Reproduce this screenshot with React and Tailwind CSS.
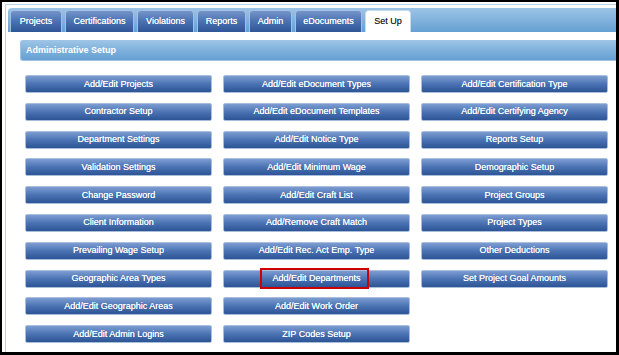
const tabs = [
  { label: "Projects", w: "w-[52px]" },
  { label: "Certifications", w: "w-[69px]" },
  { label: "Violations", w: "w-[57px]" },
  { label: "Reports", w: "w-[49px]" },
  { label: "Admin", w: "w-[43px]" },
  { label: "eDocuments", w: "w-[67px]" },
];

const columns = [
  [
    "Add/Edit Projects",
    "Contractor Setup",
    "Department Settings",
    "Validation Settings",
    "Change Password",
    "Client Information",
    "Prevailing Wage Setup",
    "Geographic Area Types",
    "Add/Edit Geographic Areas",
    "Add/Edit Admin Logins",
  ],
  [
    "Add/Edit eDocument Types",
    "Add/Edit eDocument Templates",
    "Add/Edit Notice Type",
    "Add/Edit Minimum Wage",
    "Add/Edit Craft List",
    "Add/Remove Craft Match",
    "Add/Edit Rec. Act Emp. Type",
    "Add/Edit Departments",
    "Add/Edit Work Order",
    "ZIP Codes Setup",
  ],
  [
    "Add/Edit Certification Type",
    "Add/Edit Certifying Agency",
    "Reports Setup",
    "Demographic Setup",
    "Project Groups",
    "Project Types",
    "Other Deductions",
    "Set Project Goal Amounts",
  ],
];

const SetupButton = ({ label, marked }) => (
  <div className="relative flex h-[18px] items-center justify-center rounded-[2px] border border-[#a9bedb] bg-gradient-to-b from-[#7d9dd1] via-[#4b73b3] to-[#2d5596] text-[9px] leading-none text-white [text-shadow:0_0_0.6px_rgba(255,255,255,0.9)]">
    {label}
    {marked && (
      <div className="absolute left-[36px] top-[-3px] h-[21px] w-[109px] border-2 border-[#cc0000]"></div>
    )}
  </div>
);

const App = () => {
  return (
    <div className="h-[355px] w-[619px] overflow-hidden border-b-[3px] border-l-2 border-r-[3px] border-t-2 border-black bg-white font-['Liberation_Sans',Arial,sans-serif]">
      <div className="ml-[3px] mt-[2px] h-full border-l border-t border-[#b9d2ea] pl-[2px] pt-[3px]">
        <div className="flex h-[24px] items-end gap-[3px] rounded-tl-[4px] bg-gradient-to-b from-[#9cc4e6] via-[#82b2dc] to-[#65a0d3] pl-[2px]">
          {tabs.map((t) => (
            <div
              key={t.label}
              className={`${t.w} flex h-[22px] items-center justify-center rounded-t-[4px] border border-b-0 border-[#a3bfe2] bg-gradient-to-b from-[#7495ca] via-[#4a71b1] to-[#2f5697] text-[9px] text-white [text-shadow:0_0_0.6px_rgba(255,255,255,0.9)]`}
            >
              {t.label}
            </div>
          ))}
          <div className="flex h-[22px] w-[46px] items-center justify-center rounded-t-[4px] border border-b-0 border-[#c9dcef] bg-white text-[9px] text-[#222] [text-shadow:0_0_0.6px_rgba(0,0,0,0.6)]">
            Set Up
          </div>
        </div>
        <div className="pl-[12px] pt-[8px]">
          <div className="flex h-[21px] items-center rounded-l-[3px] border border-r-0 border-[#9fc3e4] bg-gradient-to-b from-[#9cc4e6] via-[#7eb0db] to-[#65a0d3] pl-[5px] text-[9px] font-bold text-white">
            Administrative Setup
          </div>
          <div className="mt-[14px] grid grid-cols-[187px_187px_187px] gap-x-[11px] pl-[5px]">
            {columns.map((col, ci) => (
              <div key={ci} className="flex flex-col gap-y-[9.8px]">
                {col.map((label) => (
                  <SetupButton key={label} label={label} marked={label === "Add/Edit Departments"} />
                ))}
              </div>
            ))}
          </div>
        </div>
      </div>
    </div>
  );
};

export default App;
